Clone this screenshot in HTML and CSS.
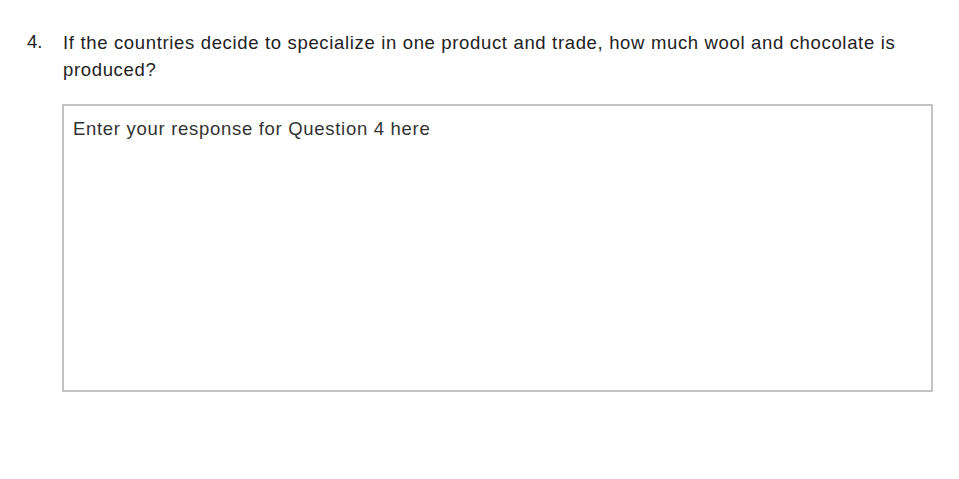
FILE: index.html
```html
<!DOCTYPE html>
<html>
<head>
<meta charset="utf-8">
<link rel="stylesheet" href="styles.css">
</head>
<body>
<div class="question">
  <div class="num">4.</div>
  <div class="content">
    <p class="prompt">If the countries decide to specialize in one product and trade, how much wool and chocolate is produced?</p>
    <div class="response">Enter your response for Question 4 here</div>
  </div>
</div>
</body>
</html>
```

FILE: styles.css
```css
html, body {
  margin: 0;
  padding: 0;
  background: #ffffff;
}
body {
  font-family: "Liberation Sans", Arial, sans-serif;
  color: #222222;
}
.question {
  display: flex;
  padding: 29px 26px 0 27px;
}
.num {
  width: 36px;
  font-size: 18.5px;
  line-height: 26px;
  flex: none;
}
.content {
  flex: 1;
}
.prompt {
  margin: 0;
  font-size: 18.5px;
  line-height: 27px;
  letter-spacing: 0.66px;
  width: 850px;
}
.response {
  margin-top: 21px;
  margin-left: -1px;
  height: 260px;
  border: 2px solid #c4c4c4;
  padding: 12px 9px;
  font-size: 18.5px;
  line-height: 22px;
  letter-spacing: 0.7px;
  color: #333333;
}
```
